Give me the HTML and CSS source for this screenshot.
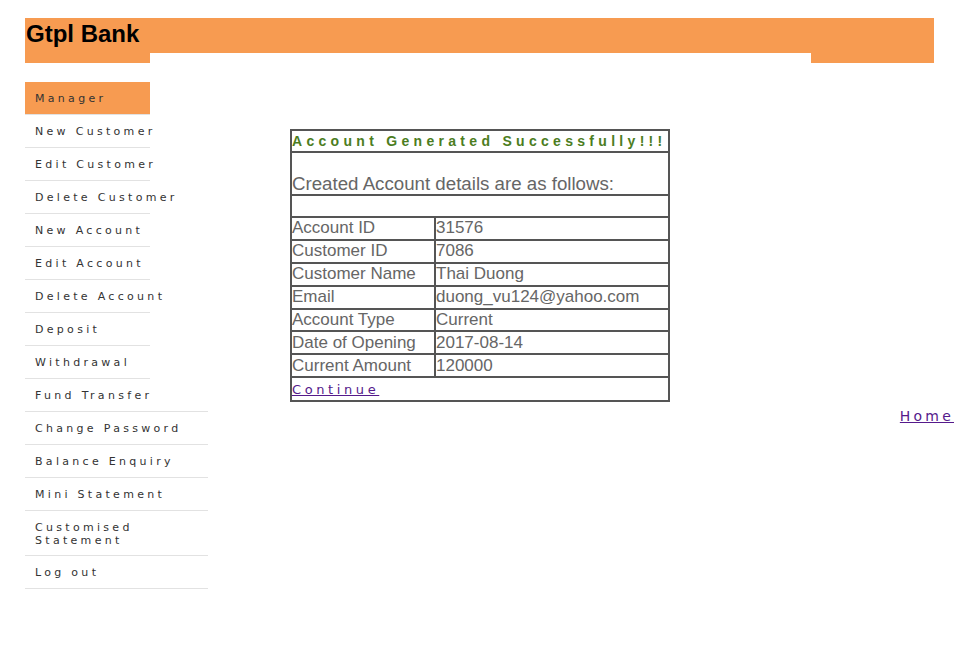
FILE: index.html
```html
<!DOCTYPE html>
<html>
<head>
<meta charset="utf-8">
<title>Gtpl Bank</title>
<link rel="stylesheet" href="styles.css">
</head>
<body>
<div class="page">
  <div class="header">
    <h2 class="brand">Gtpl Bank</h2>
  </div>
  <div class="header-tabs">
    <div class="tab-left"></div>
    <div class="tab-gap"></div>
    <div class="tab-right"></div>
  </div>
  <div class="main">
    <ul class="menu">
      <li class="item short active">Manager</li>
      <li class="item short">New Customer</li>
      <li class="item short">Edit Customer</li>
      <li class="item short">Delete Customer</li>
      <li class="item short">New Account</li>
      <li class="item short">Edit Account</li>
      <li class="item short">Delete Account</li>
      <li class="item short">Deposit</li>
      <li class="item short">Withdrawal</li>
      <li class="item">Fund Transfer</li>
      <li class="item">Change Password</li>
      <li class="item">Balance Enquiry</li>
      <li class="item">Mini Statement</li>
      <li class="item two-line">Customised<br>Statement</li>
      <li class="item">Log out</li>
    </ul>
    <div class="content">
      <table class="details">
        <colgroup><col class="col-label"><col class="col-value"></colgroup>
        <tr><td colspan="2" class="title">Account Generated Successfully!!!</td></tr>
        <tr><td colspan="2" class="intro">Created Account details are as follows:</td></tr>
        <tr><td colspan="2" class="blank">&nbsp;</td></tr>
        <tr><td>Account ID</td><td>31576</td></tr>
        <tr><td>Customer ID</td><td>7086</td></tr>
        <tr><td>Customer Name</td><td>Thai Duong</td></tr>
        <tr><td>Email</td><td>duong_vu124@yahoo.com</td></tr>
        <tr><td>Account Type</td><td>Current</td></tr>
        <tr><td>Date of Opening</td><td>2017-08-14</td></tr>
        <tr><td>Current Amount</td><td>120000</td></tr>
        <tr><td colspan="2" class="cont"><a href="#" class="link">Continue</a></td></tr>
      </table>
      <div class="home-row"><a href="#" class="link home">Home</a></div>
    </div>
  </div>
</div>
</body>
</html>
```

FILE: styles.css
```css
html, body {
  margin: 0;
  padding: 0;
  background: #ffffff;
}
.page {
  padding-top: 18px;
  font-family: "Liberation Sans", Arial, sans-serif;
}
.header {
  margin-left: 25px;
  width: 909px;
  height: 35px;
  background: #f79b51;
}
.brand {
  margin: 0;
  padding: 2px 0 0 1px;
  font-size: 24px;
  font-weight: bold;
  color: #000;
  line-height: 27px;
}
.header-tabs {
  margin-left: 25px;
  width: 909px;
  height: 10px;
  display: flex;
}
.tab-left {
  width: 125px;
  background: #f79b51;
}
.tab-gap {
  flex: 1;
}
.tab-right {
  width: 123px;
  background: #f79b51;
}
.main {
  display: flex;
  margin-top: 19px;
}
.menu {
  list-style: none;
  margin: 0 0 0 25px;
  padding: 0;
  width: 183px;
  flex: none;
}
.item {
  font-family: "DejaVu Sans", "Lucida Grande", sans-serif;
  font-size: 11px;
  line-height: 13px;
  letter-spacing: 3.3px;
  color: #333;
  padding: 10px 0 9px 10px;
  border-bottom: 1px solid #e2e2e2;
  white-space: nowrap;
}
.item.two-line {
  line-height: 13px;
  padding-bottom: 8px;
}
.item.short {
  width: 115px;
}
.item.active {
  background: #f79b51;
}
.content {
  flex: 1;
  padding-left: 82px;
  padding-top: 47px;
}
.details {
  border: 1px solid #555;
  border-spacing: 0;
  width: 380px;
  table-layout: fixed;
  font-family: "Liberation Sans", Arial, sans-serif;
  font-size: 17px;
  color: #666;
}
.col-label {
  width: 144px;
}
.details td {
  border: 1px solid #555;
  padding: 0;
  line-height: 20px;
  height: 20.9px;
  vertical-align: middle;
  white-space: nowrap;
  overflow: hidden;
}
.details td.title {
  font-size: 14px;
  font-weight: bold;
  letter-spacing: 4.3px;
  color: #4c7d1e;
  height: 20px;
}
.details td.intro {
  font-size: 18.7px;
  height: 41px;
  vertical-align: bottom;
}
.details td.blank {
  height: 19px;
}
.details td.cont {
  height: 22px;
}
.link {
  font-family: "DejaVu Sans", sans-serif;
  font-size: 13px;
  letter-spacing: 3.6px;
  color: #551a8b;
  text-decoration: underline;
}
.home-row {
  text-align: right;
  padding-right: 6px;
  margin-top: 5px;
}
.home {
  font-size: 14px;
  letter-spacing: 3.2px;
}
```
